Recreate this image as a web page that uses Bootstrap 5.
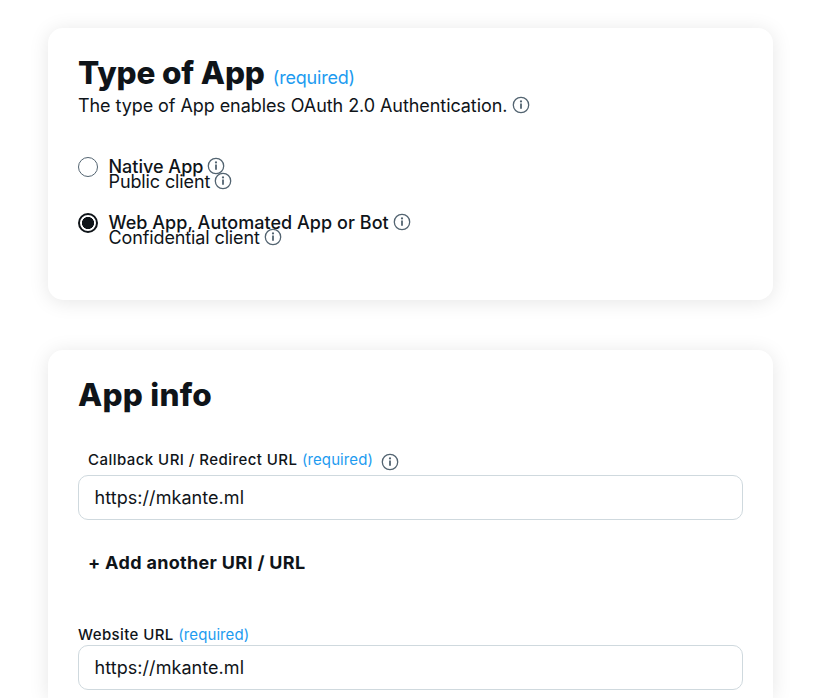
<!DOCTYPE html>
<html lang="en">
<head>
<meta charset="utf-8">
<meta name="viewport" content="width=device-width, initial-scale=1">
<title>App settings</title>
<link href="https://cdn.jsdelivr.net/npm/bootstrap@5.3.0/dist/css/bootstrap.min.css" rel="stylesheet">
<style>
body{font-family:Inter,"Liberation Sans",sans-serif;font-size:18px;font-weight:400;color:#0f1419;background:#fff}
.page{padding:28px 58px 0 48px;gap:50px;height:100vh}
.panel{border:0;border-radius:15px;box-shadow:0 2px 20px rgba(0,0,0,.1);padding:0 30px;color:inherit}
.panel-type{height:272px;flex:none;padding-top:30px}
.panel-info{flex:1 0 0;min-height:0;padding-top:30px;border-bottom-left-radius:0;border-bottom-right-radius:0}
.title{font-size:31.5px;line-height:30px;font-weight:800;letter-spacing:-.15px}
.title-info{letter-spacing:.25px}
.req{color:#1d9bf0}
.title-req{line-height:20px;margin-left:8px;letter-spacing:-.2px}
.desc{line-height:20px;margin-top:7px}
.w-desc{padding-top:1px;letter-spacing:-.07px}
.w-public,.w-conf{letter-spacing:-.12px}
.info-dot{width:18px;height:18px;margin:-1px 0 0 4.5px;flex:none;color:#536471}
.choices{margin-top:41px;gap:20px}
.choice{min-height:36px;gap:10.5px}
.choice .form-check-input{width:20px;height:20px;margin:0;border:1px solid #536471;background-image:none;background-color:#fff;box-shadow:none;flex:none}
.choice .form-check-input:checked{border:2px solid #0f1419;background:radial-gradient(circle,#0f1419 5.7px,transparent 6.4px)}
.choice-text{padding-top:2px}
.tight{line-height:15px;height:15px}
.tight .info-dot{margin-left:4px}
.w-native,.w-web{font-weight:550}
.w-web{letter-spacing:.04px}
.field-label{font-size:15px;line-height:20px;font-weight:500;letter-spacing:.1px}
.field-label .req{font-weight:400;margin-left:4.5px}
.field-callback{padding:0 0 5px 10px;margin-top:40px}
.field-callback .info-dot{margin:3px 0 -1px 8px}
.w-call{letter-spacing:.45px}
.w-site{letter-spacing:.4px}
.url-input{height:45px;flex:none;border:1px solid #cfd9de;border-radius:10px;padding:0 15px 0 15.5px;font-size:18px;letter-spacing:.06px;color:#0f1419}
.add-btn{font-size:18px;font-weight:650;line-height:20px;border:0;padding:0;color:#0f1419;margin:33px 0 52px 10px;letter-spacing:.32px}
</style>
</head>
<body>
<svg class="d-none" xmlns="http://www.w3.org/2000/svg">
<symbol id="info" viewBox="0 0 18 18"><circle cx="9" cy="9" r="7.7" fill="none" stroke="currentColor" stroke-width="1.3"/><path d="M9 7.6v5.2" stroke="currentColor" stroke-width="1.8"/><circle cx="9" cy="5.4" r="1.1" fill="currentColor"/></symbol>
</svg>
<main class="page d-flex flex-column overflow-hidden">
<section class="card panel panel-type">
<div class="d-flex align-items-baseline"><h1 class="title m-0">Type of App</h1><span class="req title-req">(required)</span></div>
<div class="desc d-flex align-items-center"><span class="w-desc">The type of App enables OAuth 2.0 Authentication.</span><svg class="info-dot"><use href="#info"/></svg></div>
<div class="choices d-flex flex-column">
<label class="choice d-flex align-items-start"><input class="form-check-input" type="radio" name="kind"><span class="choice-text d-flex flex-column">
<span class="tight d-flex align-items-center"><span class="w-native">Native App</span><svg class="info-dot"><use href="#info"/></svg></span>
<span class="tight d-flex align-items-center"><span class="w-public">Public client</span><svg class="info-dot"><use href="#info"/></svg></span></span></label>
<label class="choice d-flex align-items-start"><input class="form-check-input" type="radio" name="kind" checked><span class="choice-text d-flex flex-column">
<span class="tight d-flex align-items-center"><span class="w-web">Web App, Automated App or Bot</span><svg class="info-dot"><use href="#info"/></svg></span>
<span class="tight d-flex align-items-center"><span class="w-conf">Confidential client</span><svg class="info-dot"><use href="#info"/></svg></span></span></label>
</div>
</section>
<section class="card panel panel-info">
<h2 class="title title-info m-0">App info</h2>
<div class="field-label field-callback d-flex align-items-center"><span class="w-call">Callback URI / Redirect URL</span><span class="req">(required)</span><svg class="info-dot"><use href="#info"/></svg></div>
<input class="form-control url-input" type="text" value="https://mkante.ml" aria-label="Callback URI">
<button class="btn add-btn align-self-start" type="button">+ Add another URI / URL</button>
<div class="field-label d-flex align-items-center"><span class="w-site">Website URL</span><span class="req">(required)</span></div>
<input class="form-control url-input" type="text" value="https://mkante.ml" aria-label="Website URL">
</section>
</main>
<script src="https://cdn.jsdelivr.net/npm/bootstrap@5.3.0/dist/js/bootstrap.bundle.min.js"></script>
</body>
</html>
